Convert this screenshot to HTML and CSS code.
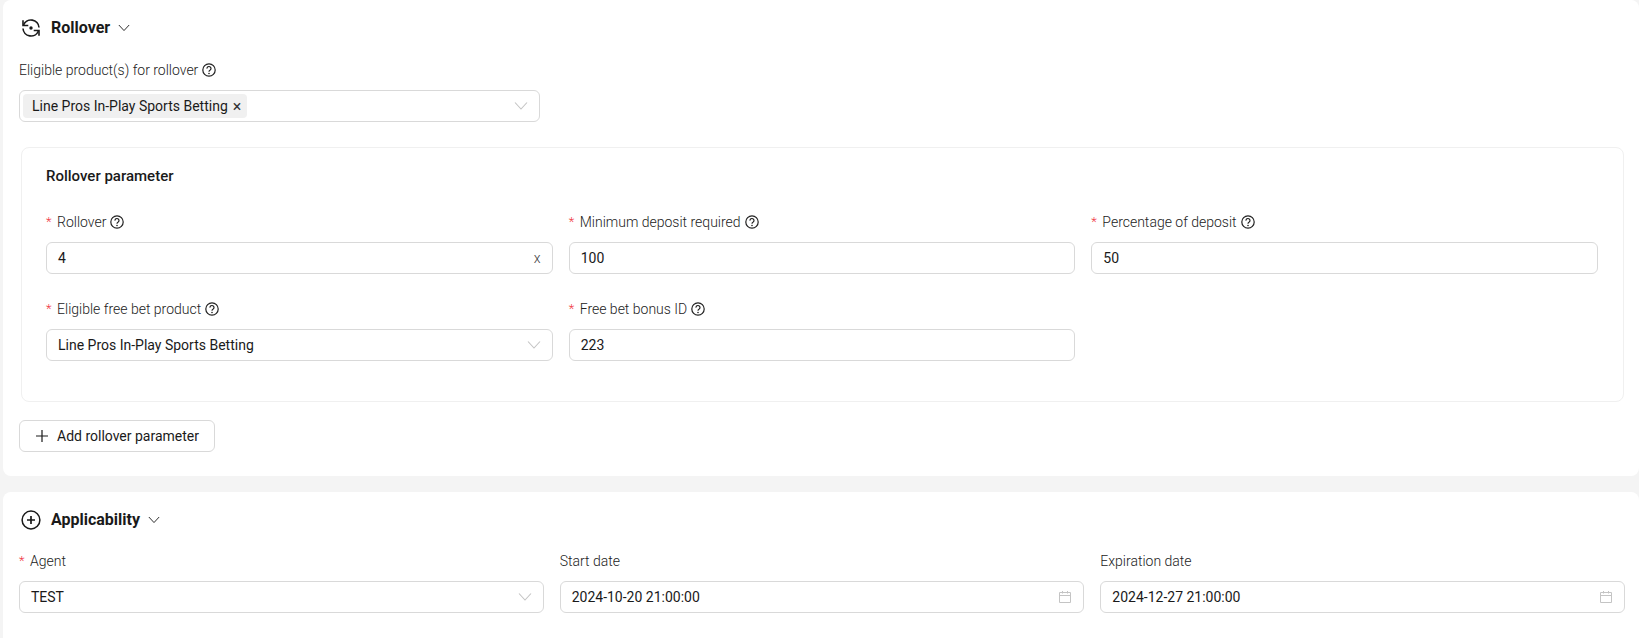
FILE: index.html
```html
<!DOCTYPE html>
<html lang="en">
<head>
<meta charset="utf-8">
<title>Rollover</title>
<link rel="stylesheet" href="styles.css">
</head>
<body>
<svg class="defs" width="0" height="0" aria-hidden="true">
  <symbol id="help" viewBox="0 0 14 14">
    <circle cx="7" cy="7" r="6.200" fill="none" stroke="currentColor" stroke-width="1.200"/>
    <path d="M5 5.600a2 2 0 1 1 3.200 1.500c-.8.500-1.200.8-1.200 1.700" fill="none" stroke="currentColor" stroke-width="1.200"/>
    <circle cx="7" cy="10.500" r=".8" fill="currentColor"/>
  </symbol>
  <symbol id="chev" viewBox="0 0 14 14">
    <path d="M1 3.500 7 10l6-6.500" fill="none" stroke="currentColor" stroke-width="1.100"/>
  </symbol>
  <symbol id="cal" viewBox="0 0 14 14">
    <path d="M1.500 2.500h11v10h-11zM1.500 5.500h11M4.500 1v2.500M9.500 1v2.500" fill="none" stroke="currentColor" stroke-width="1"/>
  </symbol>
</svg>
<section class="card card-first">
  <h2 class="head">
    <svg class="head-icon" viewBox="0 0 20 20" aria-hidden="true">
      <path d="M2.600 7A8 8 0 0 1 18 9.500" fill="none" stroke="currentColor" stroke-width="1.600"/>
      <path d="M17.400 13A8 8 0 0 1 2 10.500" fill="none" stroke="currentColor" stroke-width="1.600"/>
      <path d="M2 2.200v5.300h5.300" fill="none" stroke="currentColor" stroke-width="1.600"/>
      <path d="M18 17.800v-5.300h-5.300" fill="none" stroke="currentColor" stroke-width="1.600"/>
      <circle cx="10" cy="10" r="1.700" fill="currentColor"/>
    </svg>
    <span>Rollover</span>
    <svg class="head-chev"><use href="#chev"/></svg>
  </h2>

  <div class="label"><span>Eligible product(s) for rollover</span><svg class="help"><use href="#help"/></svg></div>
  <div class="box box-multi">
    <span class="tag">Line Pros In-Play Sports Betting<span class="tag-x">×</span></span>
    <svg class="box-chev"><use href="#chev"/></svg>
  </div>

  <div class="panel">
    <h3 class="panel-title">Rollover parameter</h3>
    <div class="grid">
      <div class="field">
        <div class="label"><span class="req">*</span><span>Rollover</span><svg class="help"><use href="#help"/></svg></div>
        <div class="box"><span class="val">4</span><span class="suffix">x</span></div>
      </div>
      <div class="field">
        <div class="label"><span class="req">*</span><span>Minimum deposit required</span><svg class="help"><use href="#help"/></svg></div>
        <div class="box"><span class="val">100</span></div>
      </div>
      <div class="field">
        <div class="label"><span class="req">*</span><span>Percentage of deposit</span><svg class="help"><use href="#help"/></svg></div>
        <div class="box"><span class="val">50</span></div>
      </div>
      <div class="field">
        <div class="label"><span class="req">*</span><span>Eligible free bet product</span><svg class="help"><use href="#help"/></svg></div>
        <div class="box"><span class="val">Line Pros In-Play Sports Betting</span><svg class="box-chev"><use href="#chev"/></svg></div>
      </div>
      <div class="field">
        <div class="label"><span class="req">*</span><span>Free bet bonus ID</span><svg class="help"><use href="#help"/></svg></div>
        <div class="box"><span class="val">223</span></div>
      </div>
    </div>
  </div>

  <button class="btn" type="button">
    <svg class="btn-plus" viewBox="0 0 14 14" aria-hidden="true"><path d="M7 1v12M1 7h12" fill="none" stroke="currentColor" stroke-width="1.200"/></svg>
    <span>Add rollover parameter</span>
  </button>
</section>

<section class="card card-second">
  <h2 class="head">
    <svg class="head-icon" viewBox="0 0 20 20" aria-hidden="true">
      <circle cx="10" cy="10" r="8.900" fill="none" stroke="currentColor" stroke-width="1.500"/>
      <path d="M10 6v8M6 10h8" fill="none" stroke="currentColor" stroke-width="1.700"/>
    </svg>
    <span>Applicability</span>
    <svg class="head-chev"><use href="#chev"/></svg>
  </h2>
  <div class="grid">
    <div class="field">
      <div class="label"><span class="req">*</span><span>Agent</span></div>
      <div class="box box-agent"><span class="val">TEST</span><svg class="box-chev"><use href="#chev"/></svg></div>
    </div>
    <div class="field">
      <div class="label"><span>Start date</span></div>
      <div class="box"><span class="val">2024-10-20 21:00:00</span><svg class="box-cal"><use href="#cal"/></svg></div>
    </div>
    <div class="field">
      <div class="label"><span>Expiration date</span></div>
      <div class="box"><span class="val">2024-12-27 21:00:00</span><svg class="box-cal"><use href="#cal"/></svg></div>
    </div>
  </div>
</section>
</body>
</html>
```

FILE: styles.css
```css
* { box-sizing: border-box; }

html, body { height: 100%; }

body {
  margin: 0;
  padding-left: 3px;
  overflow: hidden;
  background: #f4f4f4;
  color: #1a1a1a;
  font-family: Roboto, "Liberation Sans", sans-serif;
  font-size: 14px;
}

.defs { position: absolute; }

.card {
  padding-top: 17px;
  padding-left: 16px;
  border-radius: 8px;
  background: #fff;
}

.card-first {
  height: 476px;
  padding-right: 15px;
}

.card-second {
  height: 160px;
  margin-top: 16px;
  padding-right: 14px;
}

.head {
  display: flex;
  align-items: center;
  height: 22px;
  margin: 0 0 21px;
  font-size: 16px;
  font-weight: 700;
  line-height: 22px;
}

.card-second .head { margin-bottom: 20px; }

.head-icon {
  width: 20px;
  height: 20px;
  margin-left: 2px;
  margin-right: 10px;
}

.head-chev {
  width: 12px;
  height: 12px;
  margin-left: 8px;
  color: #222;
}

.label {
  display: flex;
  align-items: center;
  height: 20px;
  margin-bottom: 10px;
  color: #222;
  font-weight: 300;
  line-height: 20px;
}

.req {
  margin-right: 5.500px;
  color: #f0323e;
  font-size: 13px;
}

.help {
  width: 14px;
  height: 14px;
  margin-left: 4px;
  color: #222;
}

.box {
  display: flex;
  align-items: center;
  justify-content: space-between;
  height: 32px;
  padding: 0 11px;
  border: 1px solid #d9d9d9;
  border-radius: 6px;
  background: #fff;
}

.box-multi {
  width: 521px;
  padding-left: 3px;
}

.box-agent { margin-top: 1px; }

.suffix {
  color: #444;
  font-weight: 300;
}

.tag {
  display: inline-flex;
  align-items: center;
  height: 24px;
  padding: 0 6px 0 9px;
  border-radius: 4px;
  background: #f0f0f0;
}

.tag-x {
  margin-left: 5px;
  color: #333;
  font-size: 16px;
}

.box-chev {
  width: 14px;
  height: 14px;
  color: #c4c4c4;
}

.box-cal {
  width: 14px;
  height: 14px;
  color: #c4c4c4;
}

.panel {
  height: 255px;
  margin-top: 25px;
  margin-left: 2px;
  padding: 17px 25px 0 24px;
  border: 1px solid #f0f0f0;
  border-radius: 8px;
}

.panel-title {
  height: 22px;
  margin: 0 0 25px;
  font-size: 15px;
  font-weight: 500;
  line-height: 22px;
}

.grid {
  display: grid;
  grid-template-columns: repeat(3, 1fr);
  column-gap: 16px;
  row-gap: 25px;
}

.btn {
  display: flex;
  align-items: center;
  width: 196px;
  height: 32px;
  margin-top: 18px;
  padding: 0 0 0 15px;
  border: 1px solid #d9d9d9;
  border-radius: 6px;
  background: #fff;
  color: inherit;
  font: inherit;
}

.btn-plus {
  width: 14px;
  height: 14px;
  margin-right: 8px;
}
```
